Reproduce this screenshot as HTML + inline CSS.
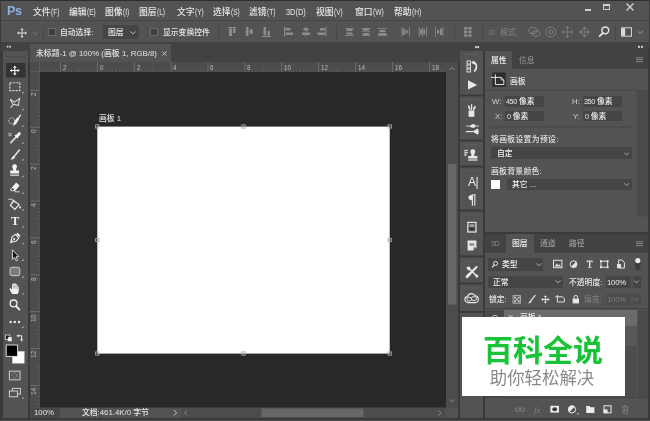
<!DOCTYPE html>
<html lang="zh-CN">
<head>
<meta charset="utf-8">
<title>Photoshop</title>
<style>
*{margin:0;padding:0;box-sizing:border-box}
html,body{width:650px;height:421px;overflow:hidden;background:#383838}
body{position:relative;font-family:"Liberation Sans","Noto Sans CJK SC",sans-serif;font-size:7.8px;color:#e6e6e6;line-height:1;font-weight:500}
.a{position:absolute}
.t{position:absolute;white-space:nowrap;line-height:10px;height:10px;will-change:transform}
.p{background:#535353}
.d{background:#424242}
.f{position:absolute;background:#454545}
svg{position:absolute;overflow:visible}
.m{top:6.5px;font-size:8.8px}
.rl{font-size:6.3px;line-height:7px;height:7px;color:#bcbcbc;font-weight:400}
.cb{width:8px;height:8px;background:#3e3e3e;border:1px solid #6a6a6a}
.l{display:inline-block;transform:scaleX(.75);transform-origin:0 50%}
.n{font-size:7.2px;letter-spacing:-0.4px}
</style>
</head>
<body>
<!-- window frame -->
<div class="a" style="left:0;top:0;width:650px;height:421px;background:#3a3a3a"></div>
<div class="a" style="left:0;top:0;width:650px;height:1px;background:#2e2e2e"></div>
<div class="a" style="left:0;top:419.5px;width:650px;height:1.5px;background:#505050"></div>
<div class="a" style="left:1px;top:20px;width:648px;height:1px;background:#464646"></div>
<div class="a" style="left:1px;top:42px;width:648px;height:2px;background:#424242"></div>
<!-- menu bar -->
<div class="a p" id="menubar" style="left:1px;top:1px;width:648px;height:19px"></div>

<!-- menu text -->
<div class="t" style="left:7.3px;top:3.6px;font-size:12.6px;line-height:14px;height:14px;font-weight:bold;color:#8eb2e0;letter-spacing:-0.5px">Ps</div>
<div class="t m" style="left:33px">文件<span class="l">(F)</span></div>
<div class="t m" style="left:69px">编辑<span class="l">(E)</span></div>
<div class="t m" style="left:105px">图像<span class="l">(I)</span></div>
<div class="t m" style="left:139px">图层<span class="l">(L)</span></div>
<div class="t m" style="left:177px">文字<span class="l">(Y)</span></div>
<div class="t m" style="left:213px">选择<span class="l">(S)</span></div>
<div class="t m" style="left:249px">滤镜<span class="l">(T)</span></div>
<div class="t m" style="left:286px"><span class="l" style="transform:scaleX(.84)">3D(D)</span></div>
<div class="t m" style="left:316px">视图<span class="l">(V)</span></div>
<div class="t m" style="left:355px">窗口<span class="l">(W)</span></div>
<div class="t m" style="left:394px">帮助<span class="l">(H)</span></div>
<!-- window controls -->
<div class="a" style="left:585px;top:8.5px;width:6px;height:2px;background:#d0d0d0"></div>
<div class="a" style="left:603px;top:4px;width:7px;height:6px;border:1px solid #d0d0d0;border-top-width:2px"></div>
<svg style="left:626px;top:3px" width="8" height="8" viewBox="0 0 8 8"><path d="M0.5 0.5L7.5 7.5M7.5 0.5L0.5 7.5" stroke="#d0d0d0" stroke-width="1.4" fill="none"/></svg>
<!-- options bar -->
<div class="a p" id="optbar" style="left:1px;top:21px;width:648px;height:21px"></div>

<!-- options bar content -->
<svg style="left:16.6px;top:27.7px" width="10" height="10" viewBox="0 0 12 12"><path d="M6 0L8 2.4H6.6V5.4H9.6V4L12 6L9.6 8V6.6H6.6V9.6H8L6 12L4 9.6H5.4V6.6H2.4V8L0 6L2.4 4V5.4H5.4V2.4H4Z" fill="#dcdcdc"/></svg>
<svg style="left:33px;top:32px" width="5" height="3" viewBox="0 0 5 3"><path d="M0.3 0.3L2.5 2.5L4.7 0.3" stroke="#8a8a8a" stroke-width="0.9" fill="none"/></svg>
<div class="a" style="left:43px;top:25px;width:1px;height:15px;background:#474747"></div>
<div class="a cb" style="left:48px;top:28px"></div>
<div class="t" style="left:60px;top:28.2px">自动选择:</div>
<div class="f" style="left:103px;top:25px;width:36px;height:14px"></div>
<div class="t" style="left:108px;top:28.2px">图层</div>
<svg style="left:130px;top:31px" width="6" height="4" viewBox="0 0 6 4"><path d="M0.4 0.4L3 3L5.6 0.4" stroke="#b0b0b0" stroke-width="1" fill="none"/></svg>
<div class="a cb" style="left:150px;top:28px"></div>
<div class="t" style="left:163px;top:28.2px">显示变换控件</div>
<div class="a" style="left:218px;top:25px;width:1px;height:15px;background:#474747"></div>
<svg style="left:0;top:0" width="650" height="46" viewBox="0 0 650 46"><rect x="228" y="27" width="8" height="1" fill="#8c8c8c"/><rect x="229" y="28.5" width="3" height="7.5" fill="#8c8c8c"/><rect x="233" y="28.5" width="2.5" height="4.5" fill="#8c8c8c"/><rect x="245" y="31.5" width="8" height="0.8" fill="#8c8c8c"/><rect x="246" y="27" width="2.5" height="9" fill="#8c8c8c"/><rect x="250" y="29" width="2.5" height="5" fill="#8c8c8c"/><rect x="262" y="36" width="9" height="1" fill="#8c8c8c"/><rect x="263.5" y="27" width="2.5" height="8.5" fill="#8c8c8c"/><rect x="267.5" y="31" width="2.5" height="4.5" fill="#8c8c8c"/><rect x="284" y="26.5" width="1" height="10" fill="#8c8c8c"/><rect x="285.5" y="28" width="5" height="2.5" fill="#8c8c8c"/><rect x="285.5" y="32.5" width="7.5" height="2.5" fill="#8c8c8c"/><rect x="305.6" y="26.5" width="0.8" height="10" fill="#8c8c8c"/><rect x="303.5" y="28" width="5" height="2.5" fill="#8c8c8c"/><rect x="302" y="32.5" width="8" height="2.5" fill="#8c8c8c"/><rect x="325.5" y="26.5" width="1" height="10" fill="#8c8c8c"/><rect x="320" y="28" width="5" height="2.5" fill="#8c8c8c"/><rect x="317.5" y="32.5" width="7.5" height="2.5" fill="#8c8c8c"/><rect x="345" y="28" width="9" height="0.8" fill="#8c8c8c"/><rect x="345" y="35" width="9" height="0.8" fill="#8c8c8c"/><rect x="361.5" y="28" width="9" height="0.8" fill="#8c8c8c"/><rect x="361.5" y="35" width="9" height="0.8" fill="#8c8c8c"/><rect x="377.5" y="28" width="10" height="0.8" fill="#8c8c8c"/><rect x="377.5" y="35" width="10" height="0.8" fill="#8c8c8c"/><rect x="346.5" y="29" width="6" height="2" fill="#8c8c8c"/><rect x="346.5" y="32.5" width="6" height="2" fill="#8c8c8c"/><rect x="363" y="28.5" width="6" height="2.2" fill="#8c8c8c"/><rect x="363" y="33" width="6" height="2.2" fill="#8c8c8c"/><rect x="361.5" y="31.4" width="9" height="0.7" fill="#8c8c8c"/><rect x="379.5" y="30" width="6" height="2" fill="#8c8c8c"/><rect x="378.5" y="33" width="8" height="2" fill="#8c8c8c"/><rect x="401.5" y="27" width="0.8" height="9.5" fill="#8c8c8c"/><rect x="409" y="27" width="0.8" height="9.5" fill="#8c8c8c"/><rect x="402.5" y="28.5" width="2.2" height="6.5" fill="#8c8c8c"/><rect x="405.5" y="30" width="2.2" height="3.5" fill="#8c8c8c"/><rect x="418.7" y="27" width="0.8" height="9.5" fill="#8c8c8c"/><rect x="426" y="27" width="0.8" height="9.5" fill="#8c8c8c"/><rect x="422" y="27" width="0.8" height="9.5" fill="#8c8c8c"/><rect x="420" y="29" width="1.8" height="5.5" fill="#8c8c8c"/><rect x="423.3" y="29" width="1.8" height="5.5" fill="#8c8c8c"/><rect x="435" y="27" width="0.8" height="9.5" fill="#8c8c8c"/><rect x="442.6" y="27" width="0.8" height="9.5" fill="#8c8c8c"/><rect x="437" y="30" width="2.2" height="3.5" fill="#8c8c8c"/><rect x="440" y="28.5" width="2.2" height="6.5" fill="#8c8c8c"/><rect x="464" y="27" width="3.3" height="2.6" fill="#8c8c8c"/><rect x="468.3" y="27" width="3.3" height="2.6" fill="#8c8c8c"/><rect x="464" y="30.6" width="3.3" height="2.6" fill="#8c8c8c"/><rect x="468.3" y="30.6" width="3.3" height="2.6" fill="#8c8c8c"/><rect x="464" y="34.2" width="3.3" height="2.6" fill="#8c8c8c"/><rect x="468.3" y="34.2" width="3.3" height="2.6" fill="#8c8c8c"/><rect x="336" y="25" width="1" height="15" fill="#474747"/><rect x="454" y="25" width="1" height="15" fill="#474747"/><rect x="482" y="25" width="1" height="15" fill="#474747"/><rect x="615" y="25" width="1" height="15" fill="#474747"/><g fill="none" stroke="#7e7e7e" stroke-width="1"><ellipse cx="533" cy="30.5" rx="4.2" ry="3"/><ellipse cx="536" cy="33.5" rx="4" ry="2.8"/><circle cx="550.7" cy="32" r="5"/><circle cx="550.7" cy="32" r="2"/><path d="M567.3 26.5V37.5M562 32H573M565.3 28.5L567.3 26.5L569.3 28.5M565.3 35.5L567.3 37.5L569.3 35.5M564 30L562 32L564 34M571 30L573 32L571 34"/></g><g fill="#7e7e7e"><path d="M584.5 26.5L587 29.5H582Z"/><path d="M584.5 37.5L587 34.5H582Z"/><path d="M579 32L582 29.8V34.2Z"/><path d="M590 32L587 29.8V34.2Z"/><circle cx="584.5" cy="32" r="1.3"/></g><circle cx="605.3" cy="30.3" r="3.4" fill="none" stroke="#e0e0e0" stroke-width="1.5"/><path d="M602.8 33L599.6 36.2" stroke="#e0e0e0" stroke-width="1.8" stroke-linecap="round"/><rect x="621.5" y="27.8" width="10" height="8.4" fill="none" stroke="#d8d8d8" stroke-width="1"/><rect x="622" y="28.3" width="3.2" height="7.4" fill="#d8d8d8"/><path d="M637.5 31L640.2 33.6L643 31" fill="none" stroke="#9a9a9a" stroke-width="1"/></svg>
<div class="t" style="left:488px;top:28.2px;color:#7e7e7e"><span class="l">3D</span> 模式:</div>
<!-- dark strip under options bar -->
<div class="a d" style="left:1px;top:43px;width:648px;height:8px"></div>

<!-- left toolbar -->
<div class="a p" id="toolbar" style="left:3px;top:51px;width:25px;height:367px"></div>
<div class="a d" style="left:3px;top:44px;width:25px;height:7px"></div>

<svg id="tools" style="left:0;top:0" width="40" height="421" viewBox="0 0 40 421"><rect x="6.8" y="45.8" width="1.6" height="1.8" fill="#cfcfcf"/><rect x="9.4" y="45.8" width="1.6" height="1.8" fill="#cfcfcf"/><rect x="6" y="56" width="19" height="1" fill="#4a4a4a"/><rect x="6" y="63" width="19.5" height="14.5" fill="#333"/><g transform="translate(9.8,65.5) scale(0.833)"><path d="M6 0L8.2 2.6H6.7V5.3H9.4V3.8L12 6L9.4 8.2V6.7H6.7V9.4H8.2L6 12L3.8 9.4H5.3V6.7H2.6V8.2L0 6L2.6 3.8V5.3H5.3V2.6H3.8Z" fill="#f0f0f0"/></g><rect x="9.8" y="82.8" width="10" height="7.8" fill="none" stroke="#d8d8d8" stroke-width="1.1" stroke-dasharray="2.2 1.1"/><path d="M10.3 99.2L14.6 102.2L19.6 98.6L18.3 105.6L14 104.2L10.4 107.6" fill="none" stroke="#d8d8d8" stroke-width="1.1" stroke-linejoin="miter"/><path d="M10.3 99.2L13 104.5" fill="none" stroke="#d8d8d8" stroke-width="1.1"/><circle cx="11.7" cy="120.8" r="3" fill="none" stroke="#d8d8d8" stroke-width="1" stroke-dasharray="1.6 1.2"/><path d="M20.4 115.2L18 118.8" stroke="#f2f2f2" stroke-width="1.3" stroke-linecap="round"/><path d="M17.8 118.8L15 123.2" stroke="#f2f2f2" stroke-width="2.6" stroke-linecap="round"/><path d="M14.8 123.4L13.8 125" stroke="#f2f2f2" stroke-width="1.2" stroke-linecap="round"/><path d="M19.3 133.7L16.8 136.2" stroke="#f2f2f2" stroke-width="3" stroke-linecap="round"/><path d="M15 135L18 138" stroke="#f2f2f2" stroke-width="1.3"/><path d="M16 137.2L11 142.4L10.6 143.4" stroke="#d8d8d8" stroke-width="1.8" fill="none"/><path d="M8.5 133.5H11.5M8.5 135.5H11.5M9.2 132.8V136.3M10.8 132.8V136.3" stroke="#bdbdbd" stroke-width="0.7"/><path d="M19.4 150L15 155.4" stroke="#f2f2f2" stroke-width="1.5" stroke-linecap="round"/><path d="M14.2 155.2C12.6 155.6 12.6 157.6 10.4 159.4C12.8 159.8 15 158.6 15.2 156.4Z" fill="#f2f2f2"/><path d="M14.6 164.2A2.4 2.4 0 0 1 16.4 168.2L16 170.6H19V173.6H10.2V170.6H13.2L12.8 168.2A2.4 2.4 0 0 1 14.6 164.2Z" fill="#f2f2f2"/><rect x="10.2" y="174.6" width="8.8" height="1.1" fill="#f2f2f2"/><path d="M16.2 182.6L19.6 185.4L15 191.2H11.6L10 189.8Z" fill="#f2f2f2"/><circle cx="12.6" cy="189.4" r="1.2" fill="#444"/><path d="M15 191.8H19.6" stroke="#d8d8d8" stroke-width="1"/><path d="M13.6 200.4L19 204.6L15 209.4L10.4 205.4Z" fill="none" stroke="#f0f0f0" stroke-width="1.2"/><path d="M8.4 199.4L12 199L14.6 203" fill="none" stroke="#d8d8d8" stroke-width="1"/><path d="M19.6 205.2C20.8 206.6 21.4 207.6 20.6 208.4C19.8 209 18.8 208.2 19.6 205.2Z" fill="#f0f0f0"/><g transform="translate(14.6,238.6) rotate(45)"><path d="M-2.2 -6.2H2.2V-4.4H-2.2Z" fill="#f0f0f0"/><path d="M-2.4 -3.6H2.4L3 0.5L0 5.6L-3 0.5Z" fill="none" stroke="#f0f0f0" stroke-width="1.1"/><circle cx="0" cy="0.6" r="1" fill="#f0f0f0"/><path d="M0 1V5" stroke="#f0f0f0" stroke-width="0.7"/></g><path d="M12.4 249.8V259.4L14.6 257.4L16.2 260.8L17.6 260.2L16 256.8L18.8 256.6Z" fill="#111" stroke="#eaeaea" stroke-width="0.9" stroke-linejoin="round"/><rect x="10" y="267.3" width="9.8" height="8.4" rx="2" fill="#7c7c7c" stroke="#cfcfcf" stroke-width="1"/><path d="M12.2 294C11 292.2 10.4 290.6 9.6 289.4C9.2 288.4 10.2 287.8 11 288.6L12 289.8V284.8C12 283.8 13.3 283.8 13.3 284.8V283.8C13.3 282.8 14.7 282.8 14.7 283.8V284.2C14.7 283.2 16.1 283.2 16.1 284.2V285C16.1 284.1 17.5 284.1 17.5 285V287C17.5 286.2 18.8 286.2 18.8 287V290.4C18.8 292 18.2 292.8 17.8 294Z" fill="#f0f0f0"/><path d="M13.3 285V288.6M14.7 284.4V288.6M16.1 285V288.6M17.5 287V289" stroke="#666" stroke-width="0.45"/><circle cx="13.6" cy="303.4" r="3.4" fill="none" stroke="#f0f0f0" stroke-width="1.3"/><path d="M16.2 306.2L19.4 309.6" stroke="#f0f0f0" stroke-width="1.8" stroke-linecap="round"/><circle cx="10.6" cy="322" r="1.2" fill="#ececec"/><circle cx="14.8" cy="322" r="1.2" fill="#ececec"/><circle cx="19" cy="322" r="1.2" fill="#ececec"/><path d="M23.6 91.45V93.45H21.6Z" fill="#b5b5b5"/><path d="M23.6 108.2V110.2H21.6Z" fill="#b5b5b5"/><path d="M23.6 124.95V126.95H21.6Z" fill="#b5b5b5"/><path d="M23.6 141.7V143.7H21.6Z" fill="#b5b5b5"/><path d="M23.6 158.45V160.45H21.6Z" fill="#b5b5b5"/><path d="M23.6 175.2V177.2H21.6Z" fill="#b5b5b5"/><path d="M23.6 191.95V193.95H21.6Z" fill="#b5b5b5"/><path d="M23.6 208.7V210.7H21.6Z" fill="#b5b5b5"/><path d="M23.6 225.45V227.45H21.6Z" fill="#b5b5b5"/><path d="M23.6 242.2V244.2H21.6Z" fill="#b5b5b5"/><path d="M23.6 258.95V260.95H21.6Z" fill="#b5b5b5"/><path d="M23.6 275.7V277.7H21.6Z" fill="#b5b5b5"/><path d="M23.6 292.45V294.45H21.6Z" fill="#b5b5b5"/><path d="M23.6 325.95V327.95H21.6Z" fill="#b5b5b5"/><path d="M23.6 396.7V398.7H21.6Z" fill="#b5b5b5"/><rect x="5.4" y="335" width="4.4" height="4.4" fill="#111" stroke="#e0e0e0" stroke-width="0.8"/><rect x="7.8" y="337.2" width="4" height="4" fill="#f0f0f0"/><path d="M18 335.8H21.6V340" fill="none" stroke="#e6e6e6" stroke-width="1.1"/><path d="M16.4 335.8L18.6 334.2V337.4Z" fill="#e6e6e6"/><path d="M21.6 341.6L20 339.4H23.2Z" fill="#e6e6e6"/><rect x="12.4" y="351.4" width="11.8" height="11.8" fill="#fff" stroke="#d0d0d0" stroke-width="0.6"/><rect x="6.2" y="345" width="11.4" height="11.4" fill="#000" stroke="#dadada" stroke-width="1"/><rect x="9.4" y="371.2" width="10.6" height="8.6" fill="none" stroke="#cfcfcf" stroke-width="1"/><circle cx="14.7" cy="375.5" r="2.4" fill="none" stroke="#a8a8a8" stroke-width="0.9" stroke-dasharray="1.2 0.8"/><rect x="12.4" y="388.4" width="8" height="5.6" fill="#535353" stroke="#cfcfcf" stroke-width="1"/><rect x="9.4" y="391" width="8" height="5.8" fill="#535353" stroke="#cfcfcf" stroke-width="1"/></svg>
<div class="t" style="left:11px;top:214.3px;font-family:'Liberation Serif',serif;font-weight:bold;font-size:12.4px;line-height:14px;height:14px;color:#f0f0f0">T</div>
<!-- document tab strip -->
<div class="a d" style="left:28px;top:43px;width:432px;height:19px"></div>
<div class="a p" id="doctab" style="left:30px;top:44px;width:140.5px;height:18px"></div>

<div class="t" style="left:36px;top:48.6px;color:#e4e4e4;letter-spacing:0.05px">未标题-1 @ 100% (画板 1, RGB/8)</div>
<svg style="left:161.6px;top:50.6px" width="5" height="5" viewBox="0 0 5 5"><path d="M0.5 0.5L4.5 4.5M4.5 0.5L0.5 4.5" stroke="#c8c8c8" stroke-width="1" fill="none"/></svg>
<!-- rulers -->
<div class="a" id="hruler" style="left:30px;top:62px;width:416px;height:10px;background:#4c4c4c"></div>
<div class="a" id="vruler" style="left:30px;top:62px;width:10px;height:346px;background:#4c4c4c"></div>

<svg style="left:0;top:0" width="650" height="421" viewBox="0 0 650 421"><rect x="41.55" y="68" width="0.8" height="4" fill="#5e5e5e"/><rect x="45.24" y="69.5" width="0.8" height="2.5" fill="#5e5e5e"/><rect x="48.93" y="69.5" width="0.8" height="2.5" fill="#5e5e5e"/><rect x="52.62" y="69.5" width="0.8" height="2.5" fill="#5e5e5e"/><rect x="56.31" y="69.5" width="0.8" height="2.5" fill="#5e5e5e"/><rect x="60.00" y="62" width="0.8" height="10" fill="#727272"/><rect x="63.69" y="69.5" width="0.8" height="2.5" fill="#5e5e5e"/><rect x="67.38" y="69.5" width="0.8" height="2.5" fill="#5e5e5e"/><rect x="71.07" y="69.5" width="0.8" height="2.5" fill="#5e5e5e"/><rect x="74.76" y="69.5" width="0.8" height="2.5" fill="#5e5e5e"/><rect x="78.45" y="68" width="0.8" height="4" fill="#5e5e5e"/><rect x="82.14" y="69.5" width="0.8" height="2.5" fill="#5e5e5e"/><rect x="85.83" y="69.5" width="0.8" height="2.5" fill="#5e5e5e"/><rect x="89.52" y="69.5" width="0.8" height="2.5" fill="#5e5e5e"/><rect x="93.21" y="69.5" width="0.8" height="2.5" fill="#5e5e5e"/><rect x="96.90" y="62" width="0.8" height="10" fill="#727272"/><rect x="100.59" y="69.5" width="0.8" height="2.5" fill="#5e5e5e"/><rect x="104.28" y="69.5" width="0.8" height="2.5" fill="#5e5e5e"/><rect x="107.97" y="69.5" width="0.8" height="2.5" fill="#5e5e5e"/><rect x="111.66" y="69.5" width="0.8" height="2.5" fill="#5e5e5e"/><rect x="115.35" y="68" width="0.8" height="4" fill="#5e5e5e"/><rect x="119.04" y="69.5" width="0.8" height="2.5" fill="#5e5e5e"/><rect x="122.73" y="69.5" width="0.8" height="2.5" fill="#5e5e5e"/><rect x="126.42" y="69.5" width="0.8" height="2.5" fill="#5e5e5e"/><rect x="130.11" y="69.5" width="0.8" height="2.5" fill="#5e5e5e"/><rect x="133.80" y="62" width="0.8" height="10" fill="#727272"/><rect x="137.49" y="69.5" width="0.8" height="2.5" fill="#5e5e5e"/><rect x="141.18" y="69.5" width="0.8" height="2.5" fill="#5e5e5e"/><rect x="144.87" y="69.5" width="0.8" height="2.5" fill="#5e5e5e"/><rect x="148.56" y="69.5" width="0.8" height="2.5" fill="#5e5e5e"/><rect x="152.25" y="68" width="0.8" height="4" fill="#5e5e5e"/><rect x="155.94" y="69.5" width="0.8" height="2.5" fill="#5e5e5e"/><rect x="159.63" y="69.5" width="0.8" height="2.5" fill="#5e5e5e"/><rect x="163.32" y="69.5" width="0.8" height="2.5" fill="#5e5e5e"/><rect x="167.01" y="69.5" width="0.8" height="2.5" fill="#5e5e5e"/><rect x="170.70" y="62" width="0.8" height="10" fill="#727272"/><rect x="174.39" y="69.5" width="0.8" height="2.5" fill="#5e5e5e"/><rect x="178.08" y="69.5" width="0.8" height="2.5" fill="#5e5e5e"/><rect x="181.77" y="69.5" width="0.8" height="2.5" fill="#5e5e5e"/><rect x="185.46" y="69.5" width="0.8" height="2.5" fill="#5e5e5e"/><rect x="189.15" y="68" width="0.8" height="4" fill="#5e5e5e"/><rect x="192.84" y="69.5" width="0.8" height="2.5" fill="#5e5e5e"/><rect x="196.53" y="69.5" width="0.8" height="2.5" fill="#5e5e5e"/><rect x="200.22" y="69.5" width="0.8" height="2.5" fill="#5e5e5e"/><rect x="203.91" y="69.5" width="0.8" height="2.5" fill="#5e5e5e"/><rect x="207.60" y="62" width="0.8" height="10" fill="#727272"/><rect x="211.29" y="69.5" width="0.8" height="2.5" fill="#5e5e5e"/><rect x="214.98" y="69.5" width="0.8" height="2.5" fill="#5e5e5e"/><rect x="218.67" y="69.5" width="0.8" height="2.5" fill="#5e5e5e"/><rect x="222.36" y="69.5" width="0.8" height="2.5" fill="#5e5e5e"/><rect x="226.05" y="68" width="0.8" height="4" fill="#5e5e5e"/><rect x="229.74" y="69.5" width="0.8" height="2.5" fill="#5e5e5e"/><rect x="233.43" y="69.5" width="0.8" height="2.5" fill="#5e5e5e"/><rect x="237.12" y="69.5" width="0.8" height="2.5" fill="#5e5e5e"/><rect x="240.81" y="69.5" width="0.8" height="2.5" fill="#5e5e5e"/><rect x="244.50" y="62" width="0.8" height="10" fill="#727272"/><rect x="248.19" y="69.5" width="0.8" height="2.5" fill="#5e5e5e"/><rect x="251.88" y="69.5" width="0.8" height="2.5" fill="#5e5e5e"/><rect x="255.57" y="69.5" width="0.8" height="2.5" fill="#5e5e5e"/><rect x="259.26" y="69.5" width="0.8" height="2.5" fill="#5e5e5e"/><rect x="262.95" y="68" width="0.8" height="4" fill="#5e5e5e"/><rect x="266.64" y="69.5" width="0.8" height="2.5" fill="#5e5e5e"/><rect x="270.33" y="69.5" width="0.8" height="2.5" fill="#5e5e5e"/><rect x="274.02" y="69.5" width="0.8" height="2.5" fill="#5e5e5e"/><rect x="277.71" y="69.5" width="0.8" height="2.5" fill="#5e5e5e"/><rect x="281.40" y="62" width="0.8" height="10" fill="#727272"/><rect x="285.09" y="69.5" width="0.8" height="2.5" fill="#5e5e5e"/><rect x="288.78" y="69.5" width="0.8" height="2.5" fill="#5e5e5e"/><rect x="292.47" y="69.5" width="0.8" height="2.5" fill="#5e5e5e"/><rect x="296.16" y="69.5" width="0.8" height="2.5" fill="#5e5e5e"/><rect x="299.85" y="68" width="0.8" height="4" fill="#5e5e5e"/><rect x="303.54" y="69.5" width="0.8" height="2.5" fill="#5e5e5e"/><rect x="307.23" y="69.5" width="0.8" height="2.5" fill="#5e5e5e"/><rect x="310.92" y="69.5" width="0.8" height="2.5" fill="#5e5e5e"/><rect x="314.61" y="69.5" width="0.8" height="2.5" fill="#5e5e5e"/><rect x="318.30" y="62" width="0.8" height="10" fill="#727272"/><rect x="321.99" y="69.5" width="0.8" height="2.5" fill="#5e5e5e"/><rect x="325.68" y="69.5" width="0.8" height="2.5" fill="#5e5e5e"/><rect x="329.37" y="69.5" width="0.8" height="2.5" fill="#5e5e5e"/><rect x="333.06" y="69.5" width="0.8" height="2.5" fill="#5e5e5e"/><rect x="336.75" y="68" width="0.8" height="4" fill="#5e5e5e"/><rect x="340.44" y="69.5" width="0.8" height="2.5" fill="#5e5e5e"/><rect x="344.13" y="69.5" width="0.8" height="2.5" fill="#5e5e5e"/><rect x="347.82" y="69.5" width="0.8" height="2.5" fill="#5e5e5e"/><rect x="351.51" y="69.5" width="0.8" height="2.5" fill="#5e5e5e"/><rect x="355.20" y="62" width="0.8" height="10" fill="#727272"/><rect x="358.89" y="69.5" width="0.8" height="2.5" fill="#5e5e5e"/><rect x="362.58" y="69.5" width="0.8" height="2.5" fill="#5e5e5e"/><rect x="366.27" y="69.5" width="0.8" height="2.5" fill="#5e5e5e"/><rect x="369.96" y="69.5" width="0.8" height="2.5" fill="#5e5e5e"/><rect x="373.65" y="68" width="0.8" height="4" fill="#5e5e5e"/><rect x="377.34" y="69.5" width="0.8" height="2.5" fill="#5e5e5e"/><rect x="381.03" y="69.5" width="0.8" height="2.5" fill="#5e5e5e"/><rect x="384.72" y="69.5" width="0.8" height="2.5" fill="#5e5e5e"/><rect x="388.41" y="69.5" width="0.8" height="2.5" fill="#5e5e5e"/><rect x="392.10" y="62" width="0.8" height="10" fill="#727272"/><rect x="395.79" y="69.5" width="0.8" height="2.5" fill="#5e5e5e"/><rect x="399.48" y="69.5" width="0.8" height="2.5" fill="#5e5e5e"/><rect x="403.17" y="69.5" width="0.8" height="2.5" fill="#5e5e5e"/><rect x="406.86" y="69.5" width="0.8" height="2.5" fill="#5e5e5e"/><rect x="410.55" y="68" width="0.8" height="4" fill="#5e5e5e"/><rect x="414.24" y="69.5" width="0.8" height="2.5" fill="#5e5e5e"/><rect x="417.93" y="69.5" width="0.8" height="2.5" fill="#5e5e5e"/><rect x="421.62" y="69.5" width="0.8" height="2.5" fill="#5e5e5e"/><rect x="425.31" y="69.5" width="0.8" height="2.5" fill="#5e5e5e"/><rect x="429.00" y="62" width="0.8" height="10" fill="#727272"/><rect x="432.69" y="69.5" width="0.8" height="2.5" fill="#5e5e5e"/><rect x="436.38" y="69.5" width="0.8" height="2.5" fill="#5e5e5e"/><rect x="440.07" y="69.5" width="0.8" height="2.5" fill="#5e5e5e"/><rect x="443.76" y="69.5" width="0.8" height="2.5" fill="#5e5e5e"/><rect x="37.5" y="75.14" width="2.5" height="0.8" fill="#5e5e5e"/><rect x="37.5" y="78.83" width="2.5" height="0.8" fill="#5e5e5e"/><rect x="37.5" y="82.52" width="2.5" height="0.8" fill="#5e5e5e"/><rect x="37.5" y="86.21" width="2.5" height="0.8" fill="#5e5e5e"/><rect x="30" y="89.90" width="10" height="0.8" fill="#727272"/><rect x="37.5" y="93.59" width="2.5" height="0.8" fill="#5e5e5e"/><rect x="37.5" y="97.28" width="2.5" height="0.8" fill="#5e5e5e"/><rect x="37.5" y="100.97" width="2.5" height="0.8" fill="#5e5e5e"/><rect x="37.5" y="104.66" width="2.5" height="0.8" fill="#5e5e5e"/><rect x="36" y="108.35" width="4" height="0.8" fill="#5e5e5e"/><rect x="37.5" y="112.04" width="2.5" height="0.8" fill="#5e5e5e"/><rect x="37.5" y="115.73" width="2.5" height="0.8" fill="#5e5e5e"/><rect x="37.5" y="119.42" width="2.5" height="0.8" fill="#5e5e5e"/><rect x="37.5" y="123.11" width="2.5" height="0.8" fill="#5e5e5e"/><rect x="30" y="126.80" width="10" height="0.8" fill="#727272"/><rect x="37.5" y="130.49" width="2.5" height="0.8" fill="#5e5e5e"/><rect x="37.5" y="134.18" width="2.5" height="0.8" fill="#5e5e5e"/><rect x="37.5" y="137.87" width="2.5" height="0.8" fill="#5e5e5e"/><rect x="37.5" y="141.56" width="2.5" height="0.8" fill="#5e5e5e"/><rect x="36" y="145.25" width="4" height="0.8" fill="#5e5e5e"/><rect x="37.5" y="148.94" width="2.5" height="0.8" fill="#5e5e5e"/><rect x="37.5" y="152.63" width="2.5" height="0.8" fill="#5e5e5e"/><rect x="37.5" y="156.32" width="2.5" height="0.8" fill="#5e5e5e"/><rect x="37.5" y="160.01" width="2.5" height="0.8" fill="#5e5e5e"/><rect x="30" y="163.70" width="10" height="0.8" fill="#727272"/><rect x="37.5" y="167.39" width="2.5" height="0.8" fill="#5e5e5e"/><rect x="37.5" y="171.08" width="2.5" height="0.8" fill="#5e5e5e"/><rect x="37.5" y="174.77" width="2.5" height="0.8" fill="#5e5e5e"/><rect x="37.5" y="178.46" width="2.5" height="0.8" fill="#5e5e5e"/><rect x="36" y="182.15" width="4" height="0.8" fill="#5e5e5e"/><rect x="37.5" y="185.84" width="2.5" height="0.8" fill="#5e5e5e"/><rect x="37.5" y="189.53" width="2.5" height="0.8" fill="#5e5e5e"/><rect x="37.5" y="193.22" width="2.5" height="0.8" fill="#5e5e5e"/><rect x="37.5" y="196.91" width="2.5" height="0.8" fill="#5e5e5e"/><rect x="30" y="200.60" width="10" height="0.8" fill="#727272"/><rect x="37.5" y="204.29" width="2.5" height="0.8" fill="#5e5e5e"/><rect x="37.5" y="207.98" width="2.5" height="0.8" fill="#5e5e5e"/><rect x="37.5" y="211.67" width="2.5" height="0.8" fill="#5e5e5e"/><rect x="37.5" y="215.36" width="2.5" height="0.8" fill="#5e5e5e"/><rect x="36" y="219.05" width="4" height="0.8" fill="#5e5e5e"/><rect x="37.5" y="222.74" width="2.5" height="0.8" fill="#5e5e5e"/><rect x="37.5" y="226.43" width="2.5" height="0.8" fill="#5e5e5e"/><rect x="37.5" y="230.12" width="2.5" height="0.8" fill="#5e5e5e"/><rect x="37.5" y="233.81" width="2.5" height="0.8" fill="#5e5e5e"/><rect x="30" y="237.50" width="10" height="0.8" fill="#727272"/><rect x="37.5" y="241.19" width="2.5" height="0.8" fill="#5e5e5e"/><rect x="37.5" y="244.88" width="2.5" height="0.8" fill="#5e5e5e"/><rect x="37.5" y="248.57" width="2.5" height="0.8" fill="#5e5e5e"/><rect x="37.5" y="252.26" width="2.5" height="0.8" fill="#5e5e5e"/><rect x="36" y="255.95" width="4" height="0.8" fill="#5e5e5e"/><rect x="37.5" y="259.64" width="2.5" height="0.8" fill="#5e5e5e"/><rect x="37.5" y="263.33" width="2.5" height="0.8" fill="#5e5e5e"/><rect x="37.5" y="267.02" width="2.5" height="0.8" fill="#5e5e5e"/><rect x="37.5" y="270.71" width="2.5" height="0.8" fill="#5e5e5e"/><rect x="30" y="274.40" width="10" height="0.8" fill="#727272"/><rect x="37.5" y="278.09" width="2.5" height="0.8" fill="#5e5e5e"/><rect x="37.5" y="281.78" width="2.5" height="0.8" fill="#5e5e5e"/><rect x="37.5" y="285.47" width="2.5" height="0.8" fill="#5e5e5e"/><rect x="37.5" y="289.16" width="2.5" height="0.8" fill="#5e5e5e"/><rect x="36" y="292.85" width="4" height="0.8" fill="#5e5e5e"/><rect x="37.5" y="296.54" width="2.5" height="0.8" fill="#5e5e5e"/><rect x="37.5" y="300.23" width="2.5" height="0.8" fill="#5e5e5e"/><rect x="37.5" y="303.92" width="2.5" height="0.8" fill="#5e5e5e"/><rect x="37.5" y="307.61" width="2.5" height="0.8" fill="#5e5e5e"/><rect x="30" y="311.30" width="10" height="0.8" fill="#727272"/><rect x="37.5" y="314.99" width="2.5" height="0.8" fill="#5e5e5e"/><rect x="37.5" y="318.68" width="2.5" height="0.8" fill="#5e5e5e"/><rect x="37.5" y="322.37" width="2.5" height="0.8" fill="#5e5e5e"/><rect x="37.5" y="326.06" width="2.5" height="0.8" fill="#5e5e5e"/><rect x="36" y="329.75" width="4" height="0.8" fill="#5e5e5e"/><rect x="37.5" y="333.44" width="2.5" height="0.8" fill="#5e5e5e"/><rect x="37.5" y="337.13" width="2.5" height="0.8" fill="#5e5e5e"/><rect x="37.5" y="340.82" width="2.5" height="0.8" fill="#5e5e5e"/><rect x="37.5" y="344.51" width="2.5" height="0.8" fill="#5e5e5e"/><rect x="30" y="348.20" width="10" height="0.8" fill="#727272"/><rect x="37.5" y="351.89" width="2.5" height="0.8" fill="#5e5e5e"/><rect x="37.5" y="355.58" width="2.5" height="0.8" fill="#5e5e5e"/><rect x="37.5" y="359.27" width="2.5" height="0.8" fill="#5e5e5e"/><rect x="37.5" y="362.96" width="2.5" height="0.8" fill="#5e5e5e"/><rect x="36" y="366.65" width="4" height="0.8" fill="#5e5e5e"/><rect x="37.5" y="370.34" width="2.5" height="0.8" fill="#5e5e5e"/><rect x="37.5" y="374.03" width="2.5" height="0.8" fill="#5e5e5e"/><rect x="37.5" y="377.72" width="2.5" height="0.8" fill="#5e5e5e"/><rect x="37.5" y="381.41" width="2.5" height="0.8" fill="#5e5e5e"/><rect x="30" y="385.10" width="10" height="0.8" fill="#727272"/><rect x="37.5" y="388.79" width="2.5" height="0.8" fill="#5e5e5e"/><rect x="37.5" y="392.48" width="2.5" height="0.8" fill="#5e5e5e"/><rect x="37.5" y="396.17" width="2.5" height="0.8" fill="#5e5e5e"/><rect x="37.5" y="399.86" width="2.5" height="0.8" fill="#5e5e5e"/><rect x="36" y="403.55" width="4" height="0.8" fill="#5e5e5e"/><rect x="30" y="62" width="10" height="10" fill="#4c4c4c"/><rect x="39.2" y="62" width="0.8" height="10" fill="#626262"/><rect x="30" y="71.2" width="10" height="0.8" fill="#626262"/></svg>
<div class="t rl" style="left:62.7px;top:64.4px">2</div><div class="t rl" style="left:99.6px;top:64.4px">0</div><div class="t rl" style="left:136.5px;top:64.4px">2</div><div class="t rl" style="left:173.4px;top:64.4px">4</div><div class="t rl" style="left:210.3px;top:64.4px">6</div><div class="t rl" style="left:247.2px;top:64.4px">8</div><div class="t rl" style="left:284.1px;top:64.4px">10</div><div class="t rl" style="left:321.0px;top:64.4px">12</div><div class="t rl" style="left:357.9px;top:64.4px">14</div><div class="t rl" style="left:394.8px;top:64.4px">16</div><div class="t rl" style="left:431.7px;top:64.4px">18</div><div class="t rl" style="left:30.2px;top:92.1px;transform-origin:0 0;transform:translate(0px,3.9px) rotate(-90deg)">2</div><div class="t rl" style="left:30.2px;top:129.0px;transform-origin:0 0;transform:translate(0px,3.9px) rotate(-90deg)">0</div><div class="t rl" style="left:30.2px;top:165.9px;transform-origin:0 0;transform:translate(0px,3.9px) rotate(-90deg)">2</div><div class="t rl" style="left:30.2px;top:202.8px;transform-origin:0 0;transform:translate(0px,3.9px) rotate(-90deg)">4</div><div class="t rl" style="left:30.2px;top:239.7px;transform-origin:0 0;transform:translate(0px,3.9px) rotate(-90deg)">6</div><div class="t rl" style="left:30.2px;top:276.6px;transform-origin:0 0;transform:translate(0px,3.9px) rotate(-90deg)">8</div><div class="t rl" style="left:30.2px;top:313.5px;transform-origin:0 0;transform:translate(0px,7.8px) rotate(-90deg)">10</div><div class="t rl" style="left:30.2px;top:350.4px;transform-origin:0 0;transform:translate(0px,7.8px) rotate(-90deg)">12</div><div class="t rl" style="left:30.2px;top:387.3px;transform-origin:0 0;transform:translate(0px,7.8px) rotate(-90deg)">14</div>
<!-- canvas -->
<div class="a" id="canvas" style="left:40px;top:72px;width:406px;height:336px;background:#282828"></div>


<div class="t" style="left:98.5px;top:113.5px;color:#e0e0e0">画板 1</div>
<svg style="left:0;top:0" width="650" height="421" viewBox="0 0 650 421"><rect x="97.3" y="126.6" width="292.4" height="227.0" fill="#fff"/><rect x="95.7" y="124.9" width="3.2" height="3.2" fill="none" stroke="#b0b0b0" stroke-width="0.9"/><rect x="241.9" y="124.9" width="3.2" height="3.2" fill="none" stroke="#b0b0b0" stroke-width="0.9"/><rect x="388.1" y="124.9" width="3.2" height="3.2" fill="none" stroke="#b0b0b0" stroke-width="0.9"/><rect x="95.7" y="238.4" width="3.2" height="3.2" fill="none" stroke="#b0b0b0" stroke-width="0.9"/><rect x="388.1" y="238.4" width="3.2" height="3.2" fill="none" stroke="#b0b0b0" stroke-width="0.9"/><rect x="95.7" y="351.9" width="3.2" height="3.2" fill="none" stroke="#b0b0b0" stroke-width="0.9"/><rect x="241.9" y="351.9" width="3.2" height="3.2" fill="none" stroke="#b0b0b0" stroke-width="0.9"/><rect x="388.1" y="351.9" width="3.2" height="3.2" fill="none" stroke="#b0b0b0" stroke-width="0.9"/></svg>
<div class="a" style="left:40px;top:407px;width:406px;height:1px;background:#3a3a3a"></div>
<!-- vertical scrollbar -->
<div class="a" id="vscroll" style="left:446px;top:62px;width:12px;height:346px;background:#4c4c4c"></div>
<!-- status bar -->
<div class="a p" id="status" style="left:30px;top:408px;width:428px;height:10px"></div>


<div class="a" style="left:30px;top:408px;width:30px;height:10px;background:#484848"></div>
<div class="t" style="left:34px;top:407.5px;color:#e6e6e6">100%</div>
<div class="t" style="left:82px;top:407.5px;color:#e6e6e6">文档:461.4K/0 字节</div>
<svg style="left:0;top:0" width="650" height="421" viewBox="0 0 650 421">
<path d="M174 410L176.6 412.8L174 415.6" fill="none" stroke="#c8c8c8" stroke-width="1"/>
<rect x="181" y="408" width="265" height="10" fill="#4c4c4c"/>
<path d="M187 410.4L184.6 412.8L187 415.2" fill="none" stroke="#8c8c8c" stroke-width="1"/>
<rect x="261.5" y="408.5" width="102" height="8.5" fill="#676767"/>
<path d="M438.6 410.4L441 412.8L438.6 415.2" fill="none" stroke="#8c8c8c" stroke-width="1"/>
<path d="M449.4 70L452 67.4L454.6 70" fill="none" stroke="#8c8c8c" stroke-width="1"/>
<path d="M449.4 399.6L452 402.2L454.6 399.6" fill="none" stroke="#8c8c8c" stroke-width="1"/>
<rect x="448" y="164" width="8.4" height="140.5" fill="#676767"/>
</svg>
<!-- right icon strip -->
<div class="a p" id="iconstrip" style="left:460px;top:51px;width:23px;height:367px"></div>

<svg id="ristrip" style="left:0;top:0" width="650" height="421" viewBox="0 0 650 421"><rect x="460" y="94.5" width="23" height="2" fill="#3a3a3a"/><rect x="460" y="139.5" width="23" height="2" fill="#3a3a3a"/><rect x="460" y="165.5" width="23" height="2" fill="#3a3a3a"/><rect x="460" y="209.5" width="23" height="2" fill="#3a3a3a"/><rect x="460" y="255.5" width="23" height="2" fill="#3a3a3a"/><rect x="460" y="282.5" width="23" height="2" fill="#3a3a3a"/><rect x="460" y="311" width="23" height="2" fill="#3a3a3a"/><rect x="465" y="54" width="13" height="0.8" fill="#606060"/><rect x="465" y="99.5" width="13" height="0.8" fill="#606060"/><rect x="465" y="144.5" width="13" height="0.8" fill="#606060"/><rect x="465" y="170.5" width="13" height="0.8" fill="#606060"/><rect x="465" y="214.5" width="13" height="0.8" fill="#606060"/><rect x="465" y="260.5" width="13" height="0.8" fill="#606060"/><rect x="465" y="287.5" width="13" height="0.8" fill="#606060"/><rect x="475.2" y="46" width="1.7" height="2.1" fill="#d8d8d8"/><rect x="477.4" y="46" width="1.7" height="2.1" fill="#d8d8d8"/><rect x="638" y="45.8" width="1.8" height="2.1" fill="#d8d8d8"/><rect x="641" y="45.8" width="1.8" height="2.1" fill="#d8d8d8"/><rect x="467" y="61" width="3.6" height="3" fill="none" stroke="#e8e8e8" stroke-width="0.9"/><rect x="467" y="65" width="3.6" height="3" fill="none" stroke="#e8e8e8" stroke-width="0.9"/><rect x="467" y="69" width="3.6" height="3" fill="none" stroke="#e8e8e8" stroke-width="0.9"/><path d="M472.6 62.4C476.8 62.6 478 67.6 474.2 71.6" fill="none" stroke="#e8e8e8" stroke-width="1.6"/><path d="M471.4 62.6L474.4 60.4V64.8Z" fill="#e8e8e8"/><path d="M468 80.2L477.2 84.9L468 89.6Z" fill="#e8e8e8"/><path d="M468.6 110.4H474.4V116.8H468.6Z" fill="#e8e8e8"/><path d="M468.4 105C467.2 106.4 468.6 108.6 469.6 110H470.4C470.6 108 469.8 105.8 468.4 105Z" fill="#e8e8e8"/><path d="M471.6 104.2V110" stroke="#e8e8e8" stroke-width="1.2"/><path d="M475.2 105.4C473.6 106.4 473 108.4 473 110H474C475.4 108.8 476.2 107 475.2 105.4Z" fill="#e8e8e8"/><path d="M466 126H470.4L472 124.6H474.6V127.4H472L470.4 126.6" fill="#e8e8e8" stroke="#e8e8e8" stroke-width="0.6"/><path d="M470 126H478.5" stroke="#e8e8e8" stroke-width="1"/><path d="M466 131.6H473" stroke="#e8e8e8" stroke-width="1.2"/><path d="M472.6 131.6L477.6 128.4C479.2 130 479.2 133.2 477.6 134.8Z" fill="#e8e8e8"/><path d="M464.6 150.4H468M464.6 152.6H468M464.6 154.8H467" stroke="#e8e8e8" stroke-width="0.9"/><path d="M465.2 150V156" stroke="#e8e8e8" stroke-width="0.9"/><path d="M472.8 149.4A2.2 2.2 0 0 1 474.6 153.2L474.2 156H477.4V158.4H468.2V156H471.4L471 153.2A2.2 2.2 0 0 1 472.8 149.4Z" fill="#e8e8e8"/><rect x="468.2" y="159.4" width="9.2" height="1.2" fill="#e8e8e8"/><path d="M472.6 194.8H475.6M472.4 194.8V205.8M474.8 194.8V205.8" stroke="#e8e8e8" stroke-width="1.1" fill="none"/><path d="M472.6 194.8C467 194.6 467 200.6 472.6 200.4Z" fill="#e8e8e8"/><rect x="467.8" y="222.4" width="8.2" height="9.6" fill="none" stroke="#e8e8e8" stroke-width="1.2"/><rect x="469.4" y="224.2" width="5" height="3" fill="#9a9a9a"/><rect x="469.4" y="227.6" width="5" height="2.2" fill="#2e2e2e"/><path d="M467.6 240.4H476.4V247.4L473.4 250.6H467.6Z" fill="#e8e8e8"/><rect x="469.4" y="243" width="5" height="3" fill="#9a9a9a"/><path d="M473.6 250.4V247.6H476.2Z" fill="#555"/><path d="M467 276.8L476.6 267" stroke="#e8e8e8" stroke-width="2" stroke-linecap="round"/><path d="M467 276.8L470 273.8" stroke="#e8e8e8" stroke-width="2.8" stroke-linecap="round"/><path d="M469 268.6L476.8 276" stroke="#e8e8e8" stroke-width="1.6" stroke-linecap="round"/><path d="M466.2 267.6L469.4 266.2L470.6 268.8L468.2 270.6Z" fill="#e8e8e8"/><circle cx="476.8" cy="276" r="1.5" fill="#e8e8e8"/><path d="M468 302.6C463.6 302 464.2 296.6 467.6 296.6C468.6 293 473.6 292.6 475 295.8C479 295.6 479.6 302 475.6 302.6Z" fill="none" stroke="#e8e8e8" stroke-width="1.1"/><ellipse cx="469.3" cy="299.2" rx="2.4" ry="1.9" fill="none" stroke="#e8e8e8" stroke-width="0.9"/><ellipse cx="474" cy="298.6" rx="2.6" ry="2" fill="none" stroke="#e8e8e8" stroke-width="0.9"/></svg>
<div class="t" style="left:467.5px;top:176px;font-size:12px;line-height:12px;height:12px;color:#e8e8e8;letter-spacing:-0.6px">A|</div>
<!-- properties panel -->
<div class="a d" id="proptabs" style="left:485px;top:51px;width:163px;height:18px"></div>
<div class="a p" id="propbody" style="left:485px;top:69px;width:163px;height:163px"></div>


<div class="a p" style="left:485px;top:51px;width:27px;height:18px"></div>
<div class="t" style="left:491px;top:55.6px;color:#f0f0f0;font-weight:500">属性</div>
<div class="t" style="left:518.5px;top:55.6px;color:#8c8c8c">信息</div>
<svg style="left:0;top:0" width="650" height="421" viewBox="0 0 650 421">
<rect x="636" y="57.2" width="7" height="1" fill="#858585"/><rect x="636" y="59.2" width="7" height="1" fill="#858585"/><rect x="636" y="61.2" width="7" height="1" fill="#858585"/>
<rect x="492.3" y="72.5" width="13.6" height="14.3" fill="#2e2e2e"/>
<path d="M495.4 74.4V84.5H503.8V80L501.2 77.4H491" fill="none" stroke="#e4e4e4" stroke-width="1"/><path d="M501.2 77.4V80H503.8" fill="none" stroke="#e4e4e4" stroke-width="0.8"/>
<rect x="485" y="89.5" width="151" height="1" fill="#474747"/>
<rect x="490" y="126.5" width="142" height="1" fill="#474747"/>
<rect x="636.5" y="90" width="11.5" height="126.5" fill="#4a4a4a"/>
</svg>
<div class="t" style="left:510px;top:77px;color:#e8e8e8">画板</div>
<div class="t" style="left:491.5px;top:97px;color:#d0d0d0">W:</div>
<div class="f" style="left:505px;top:96px;width:39px;height:11px"></div>
<div class="t" style="left:506px;top:97px;color:#ececec"><span class="n">450</span> 像素</div>
<div class="t" style="left:494.5px;top:111.5px;color:#d0d0d0">X:</div>
<div class="f" style="left:505px;top:111px;width:39px;height:10px"></div>
<div class="t" style="left:506.5px;top:111.5px;color:#ececec"><span class="n">0</span> 像素</div>
<div class="t" style="left:572px;top:97px;color:#d0d0d0">H:</div>
<div class="f" style="left:583px;top:96px;width:39px;height:11px"></div>
<div class="t" style="left:584px;top:97px;color:#ececec"><span class="n">350</span> 像素</div>
<div class="t" style="left:573px;top:111.5px;color:#d0d0d0">Y:</div>
<div class="f" style="left:583px;top:111px;width:39px;height:10px"></div>
<div class="t" style="left:584.5px;top:111.5px;color:#ececec"><span class="n">0</span> 像素</div>
<div class="t" style="left:491px;top:134.5px;color:#e4e4e4;letter-spacing:0.35px">将画板设置为预设:</div>
<div class="f" style="left:490.5px;top:147px;width:141px;height:12px"></div>
<div class="t" style="left:496.5px;top:149px;color:#ececec">自定</div>
<div class="t" style="left:491px;top:166.5px;color:#e4e4e4;letter-spacing:0.3px">画板背景颜色:</div>
<div class="a" style="left:491px;top:179.5px;width:9px;height:9px;background:#fff"></div>
<div class="f" style="left:507px;top:178.5px;width:124.5px;height:11.5px"></div>
<div class="t" style="left:512px;top:179.5px;color:#ececec">其它 ...</div>
<svg style="left:0;top:0" width="650" height="421" viewBox="0 0 650 421">
<path d="M624.4 152.6L626.7 154.9L629 152.6" fill="none" stroke="#a8a8a8" stroke-width="1"/>
<path d="M624.4 183.4L626.7 185.7L629 183.4" fill="none" stroke="#a8a8a8" stroke-width="1"/>
</svg>
<!-- layers panel -->
<div class="a d" id="laytabs" style="left:485px;top:234px;width:163px;height:19px"></div>
<div class="a p" id="laybody" style="left:485px;top:253px;width:163px;height:165px"></div>


<div class="a p" style="left:506px;top:234px;width:27.5px;height:19px"></div>
<div class="t" style="left:491px;top:239.3px;color:#8c8c8c"><span class="l" style="transform:scaleX(.88)">3D</span></div>
<div class="t" style="left:512px;top:239.3px;color:#f0f0f0;font-weight:500">图层</div>
<div class="t" style="left:540px;top:239.3px;color:#9c9c9c">通道</div>
<div class="t" style="left:569px;top:239.3px;color:#9c9c9c">路径</div>
<div class="f" style="left:488px;top:258px;width:54.5px;height:13px"></div>
<div class="t" style="left:501.5px;top:260.2px;color:#ececec">类型</div>
<div class="f" style="left:488px;top:276px;width:75px;height:11.5px"></div>
<div class="t" style="left:493px;top:278px;color:#ececec">正常</div>
<div class="t" style="left:569px;top:278px;color:#e4e4e4">不透明度:</div>
<div class="f" style="left:605.5px;top:276px;width:25px;height:11.5px"></div>
<div class="t" style="left:607px;top:278px;color:#ececec;letter-spacing:-0.25px">100%</div>
<div class="f" style="left:632.5px;top:276px;width:8px;height:11.5px"></div>
<div class="t" style="left:489px;top:294.5px;color:#e4e4e4">锁定:</div>
<div class="t" style="left:584px;top:294.5px;color:#7e7e7e">填充:</div>
<div class="f" style="left:605.5px;top:293.5px;width:25px;height:11.5px;background:#4b4b4b"></div>
<div class="t" style="left:607px;top:295px;color:#7e7e7e;letter-spacing:-0.25px">100%</div>
<div class="f" style="left:632.5px;top:293.5px;width:8px;height:11.5px;background:#4b4b4b"></div>
<div class="a" style="left:485px;top:307.5px;width:163px;height:1.5px;background:#404040"></div>
<div class="a" style="left:486px;top:310px;width:18px;height:87px;background:#494949"></div>
<div class="a" style="left:504px;top:310px;width:133px;height:16px;background:#6b6b6b"></div>
<div class="a" style="left:504px;top:326px;width:133px;height:20px;background:#585858"></div>
<div class="a" style="left:504px;top:346px;width:133px;height:51px;background:#4d4d4d"></div>
<div class="a" style="left:637.5px;top:310px;width:10.5px;height:87px;background:#4a4a4a"></div>
<div class="a" style="left:485px;top:397px;width:163px;height:1px;background:#434343"></div>
<div class="t" style="left:519.5px;top:312.5px;color:#f0f0f0">画板 1</div>
<svg style="left:0;top:0" width="650" height="421" viewBox="0 0 650 421">
<rect x="636" y="241.2" width="7" height="1" fill="#858585"/><rect x="636" y="243.2" width="7" height="1" fill="#858585"/><rect x="636" y="245.2" width="7" height="1" fill="#858585"/>
<circle cx="495.6" cy="263.4" r="2" fill="none" stroke="#e4e4e4" stroke-width="1"/><path d="M494.2 265L492.2 267.4" stroke="#e4e4e4" stroke-width="1.2"/>
<path d="M536.6 263.4L539 265.8L541.4 263.4" fill="none" stroke="#b4b4b4" stroke-width="1"/>
<rect x="553.5" y="260.3" width="8.4" height="7.4" fill="none" stroke="#e4e4e4" stroke-width="1"/><path d="M554.6 266.6L556.8 263.6L558.4 265.4L559.6 264.2L561 266.6Z" fill="#e4e4e4"/>
<circle cx="573.6" cy="264.2" r="3.4" fill="none" stroke="#e4e4e4" stroke-width="1"/><path d="M571.2 266.6A3.4 3.4 0 0 0 576 261.8Z" fill="#e4e4e4"/>
<path d="M586.8 260.6H592.6V262.4H591.8L591.4 261.6H590.4V267H591.4V267.8H588V267H589V261.6H588L587.6 262.4H586.8Z" fill="#e4e4e4"/>
<rect x="601" y="261.2" width="6.6" height="6" fill="none" stroke="#e4e4e4" stroke-width="1"/><rect x="600" y="260.2" width="2" height="2" fill="#e4e4e4"/><rect x="606.6" y="260.2" width="2" height="2" fill="#e4e4e4"/><rect x="600" y="266.2" width="2" height="2" fill="#e4e4e4"/><rect x="606.6" y="266.2" width="2" height="2" fill="#e4e4e4"/>
<path d="M618.6 260H622L624.4 262.4V268H618.6Z" fill="none" stroke="#e4e4e4" stroke-width="1"/><rect x="617" y="264" width="4" height="4" fill="#e4e4e4"/>
<rect x="635.2" y="258" width="5.2" height="12.4" rx="2.6" fill="#3e3e3e"/><circle cx="637.8" cy="260.6" r="2.6" fill="#ececec"/>
<path d="M555.6 280.4L558 282.8L560.4 280.4" fill="none" stroke="#b4b4b4" stroke-width="1"/>
<path d="M634.3 280.6L636.5 282.8L638.7 280.6" fill="none" stroke="#b4b4b4" stroke-width="1"/>
<path d="M634.3 298.2L636.5 300.4L638.7 298.2" fill="none" stroke="#7a7a7a" stroke-width="1"/>
<g fill="#cfcfcf"><rect x="513" y="295.6" width="7.6" height="7.6" fill="none" stroke="#bdbdbd" stroke-width="0.8"/><rect x="514" y="296.6" width="1.9" height="1.9"/><rect x="517.8" y="296.6" width="1.9" height="1.9"/><rect x="515.9" y="298.5" width="1.9" height="1.9"/><rect x="514" y="300.4" width="1.9" height="1.9"/><rect x="517.8" y="300.4" width="1.9" height="1.9"/></g>
<path d="M535 295.6L531 300.4" stroke="#dcdcdc" stroke-width="1.4" stroke-linecap="round"/><path d="M530.8 300.2C529.6 300.6 529.6 302 528 303.2C529.8 303.6 531.6 302.8 531.8 301Z" fill="#dcdcdc"/>
<g transform="translate(541.2,295.2) scale(0.7)"><path d="M6 0L8.2 2.6H6.7V5.3H9.4V3.8L12 6L9.4 8.2V6.7H6.7V9.4H8.2L6 12L3.8 9.4H5.3V6.7H2.6V8.2L0 6L2.6 3.8V5.3H5.3V2.6H3.8Z" fill="#e8e8e8"/></g>
<path d="M557.4 295V302H564.4V298.6L562.4 296.8H555.2" fill="none" stroke="#e0e0e0" stroke-width="1"/>
<path d="M573 296.4H578V297.6C578 296 573 296 573 297.6Z" fill="none"/>
<rect x="572.6" y="298.6" width="6.4" height="4.8" fill="#e8e8e8"/><path d="M574 298.6V297.2A1.8 1.8 0 0 1 577.6 297.2V298.6" fill="none" stroke="#e8e8e8" stroke-width="1"/>
<path d="M491.6 317.6C493 314.8 496.6 314.8 498 317.6" fill="none" stroke="#d8d8d8" stroke-width="1"/>
<path d="M508.6 315L510.6 317L512.6 315" fill="none" stroke="#d8d8d8" stroke-width="1"/>
<g fill="none" stroke="#808080" stroke-width="1"><ellipse cx="517.6" cy="409.6" rx="2.4" ry="1.7"/><ellipse cx="522.4" cy="409.6" rx="2.4" ry="1.7"/></g>
<rect x="550.4" y="405.8" width="8.6" height="6.8" fill="#ececec"/><ellipse cx="554.7" cy="409.2" rx="2.4" ry="2" fill="#3a3a3a"/>
<circle cx="572" cy="409.4" r="3.6" fill="none" stroke="#ececec" stroke-width="1"/><path d="M569.5 412A3.6 3.6 0 0 1 574.5 406.8Z" fill="#ececec"/><rect x="577" y="413.4" width="2" height="1" fill="#d0d0d0"/>
<path d="M586.2 406H589.4L590.4 407.2H594.4V413H586.2Z" fill="#ececec"/>
<rect x="604" y="405.8" width="7" height="7" fill="none" stroke="#ececec" stroke-width="1"/><path d="M603.6 409.4H607.6V413.2H603.6Z" fill="#ececec"/>
<g fill="none" stroke="#7c7c7c" stroke-width="0.9"><path d="M622 407H628.4M624 407V405.8H626.4V407M622.8 407L623.2 413.6H627.2L627.6 407M624.4 408.6V412M626 408.6V412"/></g>
</svg>
<div class="t" style="left:534px;top:404.5px;color:#808080;font-style:italic;font-family:'Liberation Serif',serif;font-size:9px">fx</div>
<!-- watermark -->
<div class="a" id="wm" style="left:462px;top:317px;width:163px;height:79px;background:#fff"></div>
<div class="t" style="left:482.5px;top:333.5px;width:120px;height:34px;line-height:34px;font-size:30px;font-weight:bold;color:#19c337;text-align:center;letter-spacing:0">百科全说</div>
<div class="t" style="left:489px;top:366.5px;width:106px;height:22px;line-height:22px;font-size:17.4px;font-weight:400;color:#8a8a8a;text-align:center">助你轻松解决</div>
</body>
</html>
